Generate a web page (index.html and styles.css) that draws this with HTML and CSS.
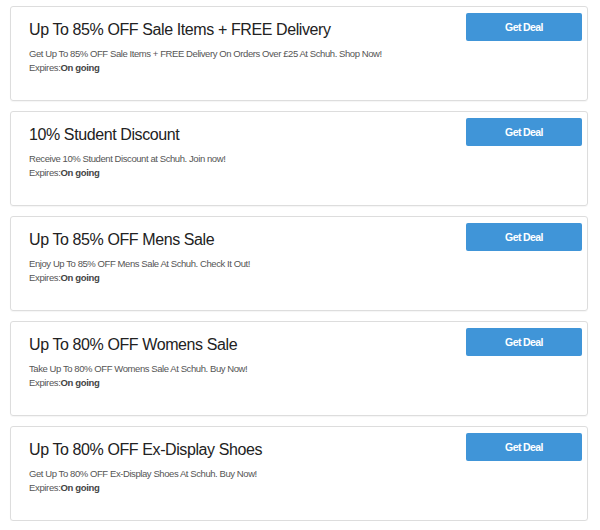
FILE: index.html
```html
<!DOCTYPE html>
<html>
<head>
<meta charset="utf-8">
<link rel="stylesheet" href="styles.css">
</head>
<body>
<div class="list">
  <div class="card">
    <div class="info">
      <div class="title">Up To 85% OFF Sale Items + FREE Delivery</div>
      <div class="desc">Get Up To 85% OFF Sale Items + FREE Delivery On Orders Over £25 At Schuh. Shop Now!</div>
      <div class="exp">Expires:<b>On going</b></div>
    </div>
    <a class="btn">Get Deal</a>
  </div>
  <div class="card">
    <div class="info">
      <div class="title">10% Student Discount</div>
      <div class="desc">Receive 10% Student Discount at Schuh. Join now!</div>
      <div class="exp">Expires:<b>On going</b></div>
    </div>
    <a class="btn">Get Deal</a>
  </div>
  <div class="card">
    <div class="info">
      <div class="title">Up To 85% OFF Mens Sale</div>
      <div class="desc">Enjoy Up To 85% OFF Mens Sale At Schuh. Check It Out!</div>
      <div class="exp">Expires:<b>On going</b></div>
    </div>
    <a class="btn">Get Deal</a>
  </div>
  <div class="card">
    <div class="info">
      <div class="title">Up To 80% OFF Womens Sale</div>
      <div class="desc">Take Up To 80% OFF Womens Sale At Schuh. Buy Now!</div>
      <div class="exp">Expires:<b>On going</b></div>
    </div>
    <a class="btn">Get Deal</a>
  </div>
  <div class="card">
    <div class="info">
      <div class="title">Up To 80% OFF Ex-Display Shoes</div>
      <div class="desc">Get Up To 80% OFF Ex-Display Shoes At Schuh. Buy Now!</div>
      <div class="exp">Expires:<b>On going</b></div>
    </div>
    <a class="btn">Get Deal</a>
  </div>
</div>
</body>
</html>
```
FILE: styles.css
```css
html, body {
  margin: 0;
  padding: 0;
  background: #fff;
}
body {
  font-family: "Liberation Sans", Arial, sans-serif;
  color: #333;
}
.list {
  display: flex;
  flex-direction: column;
  gap: 10px;
  padding: 6px 12px 0 10px;
}
.card {
  box-sizing: border-box;
  height: 95px;
  border: 1px solid #ddd;
  border-radius: 3px;
  padding: 6px 5px 0 18px;
  display: flex;
  justify-content: space-between;
  align-items: flex-start;
  box-shadow: 0 1px 1px rgba(0,0,0,0.04);
}
.info {
  padding-top: 6px;
}
.title {
  font-size: 16px;
  line-height: 22px;
  letter-spacing: -0.4px;
  color: #222;
}
.desc {
  margin-top: 6px;
  font-size: 9.5px;
  line-height: 14px;
  letter-spacing: -0.42px;
  color: #555;
}
.exp {
  font-size: 9.5px;
  line-height: 14px;
  letter-spacing: -0.35px;
  color: #555;
}
.exp b {
  color: #444;
}
.btn {
  display: flex;
  align-items: center;
  justify-content: center;
  width: 116px;
  height: 28px;
  background: #4095d8;
  border-radius: 2px;
  color: #fff;
  font-size: 10.5px;
  letter-spacing: -0.6px;
  font-weight: bold;
  flex-shrink: 0;
}
```
